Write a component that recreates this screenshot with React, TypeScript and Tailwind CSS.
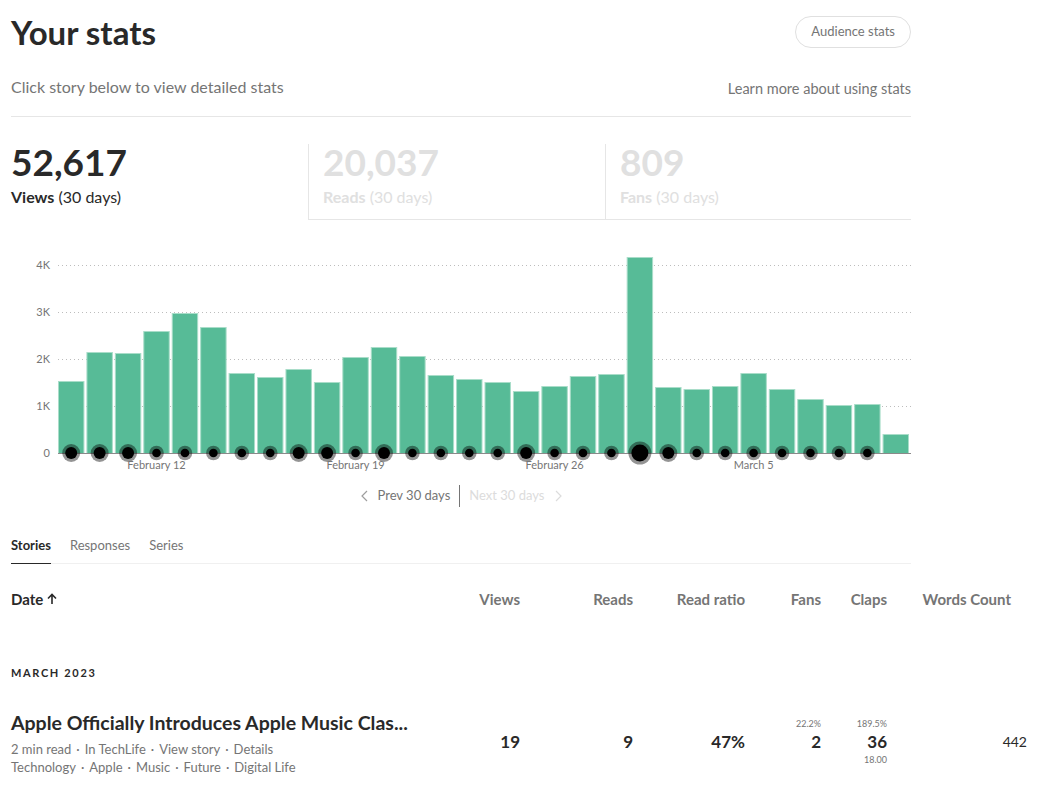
import { FC, Fragment } from "react";

const FONT = { fontFamily: "Lato, 'Open Sans', sans-serif" };

const barTops = [
  380, 351, 352, 330, 312, 326, 372, 376, 368, 381, 356, 346, 355, 374, 378,
  381, 390, 385, 375, 373, 256, 386, 388, 385, 372, 388, 398, 404, 403, 433,
];

// dot size per day: 0 none, 1 small, 2 big, 3 huge
const dots = [
  2, 2, 2, 1, 1, 1, 1, 1, 2, 2, 1, 2, 1, 1, 1, 1, 2, 1, 1, 1, 3, 2, 1, 1, 1,
  1, 1, 1, 1, 0,
];

const Chart: FC = () => {
  const top = 250;
  const base = 452 - top;
  const pitch = 853 / 30;
  const grid = [
    { label: "4K", y: 264 },
    { label: "3K", y: 311 },
    { label: "2K", y: 358 },
    { label: "1K", y: 405 },
  ];
  const xLabels = [
    { label: "February 12", i: 3 },
    { label: "February 19", i: 10 },
    { label: "February 26", i: 17 },
    { label: "March 5", i: 24 },
  ];
  return (
    <svg width={911} height={228} className="block" style={FONT}>
      {grid.map((g) => (
        <g key={g.label}>
          <line
            x1={58}
            x2={911}
            y1={g.y - top + 0.5}
            y2={g.y - top + 0.5}
            stroke="#bdbdbd"
            strokeWidth={1}
            strokeDasharray="1 3"
          />
          <text x={50} y={g.y - top + 4} textAnchor="end" fontSize={11} fill="#757575">
            {g.label}
          </text>
        </g>
      ))}
      <text x={50} y={base + 4} textAnchor="end" fontSize={11} fill="#757575">
        0
      </text>
      {barTops.map((t, i) => {
        const x = 58 + i * pitch;
        return (
          <rect
            key={i}
            x={x + 0.5}
            y={t - top + 0.5}
            width={pitch - 3}
            height={452 - t}
            fill="#57bb97"
            stroke="#a9ddc9"
            strokeWidth={1}
          />
        );
      })}
      <line x1={58} x2={911} y1={base + 0.5} y2={base + 0.5} stroke="#8a8a8a" strokeWidth={1} />
      {dots.map((d, i) => {
        if (!d) return null;
        const cx = 58 + i * pitch + (pitch - 2) / 2;
        const r = d === 3 ? 8.5 : d === 2 ? 6 : 4.3;
        return (
          <g key={i}>
            <circle cx={cx} cy={base} r={r + 3} fill="#000" fillOpacity={0.42} />
            <circle cx={cx} cy={base} r={r} fill="#000" />
          </g>
        );
      })}
      {xLabels.map((l) => (
        <text
          key={l.label}
          x={58 + l.i * pitch + (pitch - 2) / 2}
          y={465 - top + 3}
          textAnchor="middle"
          fontSize={11}
          fill="#757575"
        >
          {l.label}
        </text>
      ))}
    </svg>
  );
};

const Chevron: FC<{ dir: "left" | "right"; color: string }> = ({ dir, color }) => (
  <svg width="8" height="12" viewBox="0 0 8 12" fill="none">
    <path
      d={dir === "left" ? "M7 1 L2 6 L7 11" : "M1 1 L6 6 L1 11"}
      stroke={color}
      strokeWidth="1.2"
    />
  </svg>
);

const StatBox: FC<{ value: string; label: string; active?: boolean; className: string }> = ({
  value,
  label,
  active,
  className,
}) => (
  <div className={className}>
    <div
      className={
        active
          ? "text-[37px] leading-[36px] font-bold text-[#292929]"
          : "text-[37px] leading-[36px] font-bold text-[#e0e0e0]"
      }
    >
      {value}
    </div>
    <div
      className={
        active
          ? "mt-[5px] text-[16px] text-[#292929]"
          : "mt-[5px] text-[16px] text-[#e0e0e0]"
      }
    >
      <span className="font-bold">{label}</span> (30 days)
    </div>
  </div>
);

const Dotted: FC<{ items: string[] }> = ({ items }) => (
  <div className="text-[13px] leading-[18px] text-[#757575]">
    {items.map((it, i) => (
      <Fragment key={it}>
        {i > 0 && <span className="px-[5px]">·</span>}
        {it}
      </Fragment>
    ))}
  </div>
);

const cols = "grid grid-cols-[409px_100px_113px_112px_76px_66px_140px]";

const App: FC = () => {
  return (
    <div className="bg-white min-h-[793px] pl-[11px] overflow-hidden" style={FONT}>
      <div className="w-[900px]">
        <div className="flex items-start justify-between pt-[14px]">
          <h1 className="text-[33px] leading-[36px] font-bold text-[#292929]">Your stats</h1>
          <button className="mt-[2px] h-[32px] px-[15px] rounded-full border border-[#e0e0e0] text-[13px] text-[#757575]">
            Audience stats
          </button>
        </div>
        <div className="flex items-end justify-between mt-[25px] pb-[17px] border-b border-[#e6e6e6]">
          <p className="text-[16px] text-[#757575]">Click story below to view detailed stats</p>
          <a className="text-[14.5px] text-[#757575] -mb-[1px]">Learn more about using stats</a>
        </div>

        <div className="flex mt-[27px]">
          <StatBox className="w-[297px] h-[76px]" value="52,617" label="Views" active />
          <StatBox
            className="w-[297px] h-[76px] border-l border-b border-[#e6e6e6] pl-[14px]"
            value="20,037"
            label="Reads"
          />
          <StatBox
            className="flex-1 h-[76px] border-l border-b border-[#e6e6e6] pl-[14px]"
            value="809"
            label="Fans"
          />
        </div>

        <div className="mt-[31px] -ml-[11px]">
          <Chart />
        </div>

        <div className="flex items-center justify-center mt-[6px] text-[13px]">
          <div className="flex items-center gap-[10px] pr-[9px] text-[#757575]">
            <Chevron dir="left" color="#9e9e9e" />
            <span>Prev 30 days</span>
          </div>
          <div className="w-px h-[22px] bg-[#757575]" />
          <div className="flex items-center gap-[10px] pl-[9px] text-[#dcdcdc]">
            <span>Next 30 days</span>
            <Chevron dir="right" color="#dcdcdc" />
          </div>
        </div>

        <div className="flex gap-[19px] mt-[29px] border-b border-[#f0f0f0] text-[13px]">
          <div className="pb-[7px] border-b border-[#292929] -mb-px font-bold text-[#292929]">
            Stories
          </div>
          <div className="pb-[7px] text-[#757575]">Responses</div>
          <div className="pb-[7px] text-[#757575]">Series</div>
        </div>
      </div>

      <div className={`${cols} mt-[24px] text-[15px] font-bold text-[#757575]`}>
        <div className="flex items-center gap-[4px] text-[#292929]">
          Date
          <svg width="10" height="12" viewBox="0 0 10 12" fill="none">
            <path d="M5 11V1.5M1 5.5L5 1.5L9 5.5" stroke="#292929" strokeWidth="1.6" />
          </svg>
        </div>
        <div className="text-right">Views</div>
        <div className="text-right">Reads</div>
        <div className="text-right">Read ratio</div>
        <div className="text-right">Fans</div>
        <div className="text-right">Claps</div>
        <div className="text-right pr-[16px]">Words Count</div>
      </div>

      <div className="mt-[55px] text-[11px] font-bold tracking-[0.15em] text-[#292929]">
        MARCH 2023
      </div>

      <div className={`${cols} items-center mt-[28px]`}>
        <div>
          <div className="text-[19.5px] leading-[26px] font-bold text-[#292929] whitespace-nowrap">
            Apple Officially Introduces Apple Music Clas...
          </div>
          <div className="mt-[4px]">
            <Dotted items={["2 min read", "In TechLife", "View story", "Details"]} />
            <Dotted items={["Technology", "Apple", "Music", "Future", "Digital Life"]} />
          </div>
        </div>
        <div className="text-right text-[17px] font-bold text-[#292929] -mt-[2px]">19</div>
        <div className="text-right text-[17px] font-bold text-[#292929] -mt-[2px]">9</div>
        <div className="text-right text-[17px] font-bold text-[#292929] -mt-[2px]">47%</div>
        <div className="flex flex-col items-end -mt-[2px]">
          <div className="text-[9px] leading-[12px] text-[#757575]">22.2%</div>
          <div className="text-[17px] leading-[24px] font-bold text-[#292929]">2</div>
          <div className="text-[9px] leading-[12px] text-transparent">.</div>
        </div>
        <div className="flex flex-col items-end -mt-[2px]">
          <div className="text-[9px] leading-[12px] text-[#757575]">189.5%</div>
          <div className="text-[17px] leading-[24px] font-bold text-[#292929]">36</div>
          <div className="text-[9px] leading-[12px] text-[#757575]">18.00</div>
        </div>
        <div className="text-right text-[14px] text-[#292929] -mt-[2px]">442</div>
      </div>
    </div>
  );
};

export default App;
